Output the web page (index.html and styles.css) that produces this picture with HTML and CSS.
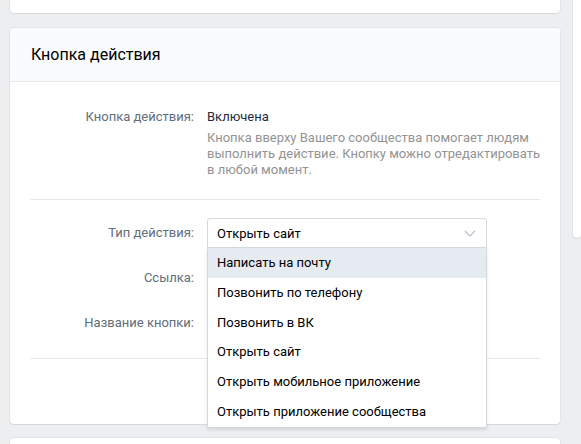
FILE: index.html
```html
<!DOCTYPE html>
<html lang="ru">
<head>
    <meta charset="UTF-8">
    <meta name="viewport" content="width=device-width, initial-scale=1.0">
    <title>Кнопка действия</title>
    <link rel="stylesheet" href="styles.css">
</head>
<body>
    <div class="page">
        <div class="main-column">
            <div class="card card-top"></div>

            <div class="card">
                <div class="card-header">
                    <h2>Кнопка действия</h2>
                </div>

                <div class="card-section card-section-status">
                    <div class="form-row form-row-top">
                        <div class="form-label">Кнопка действия:</div>
                        <div class="form-value">
                            <div class="status">Включена</div>
                            <p class="hint">Кнопка вверху Вашего сообщества помогает людям выполнить действие. Кнопку можно отредактировать в любой момент.</p>
                        </div>
                    </div>
                </div>

                <div class="card-section">
                    <div class="form-row">
                        <label class="form-label">Тип действия:</label>
                        <div class="form-value">
                            <div class="dropdown open">
                                <div class="dropdown-current">
                                    <span>Открыть сайт</span>
                                    <svg class="chevron" width="12" height="7" viewBox="0 0 12 7">
                                        <path d="M1 1l5 5 5-5" fill="none" stroke="#b4bdc8" stroke-width="1.2"/>
                                    </svg>
                                </div>
                                <ul class="dropdown-menu">
                                    <li class="active">Написать на почту</li>
                                    <li>Позвонить по телефону</li>
                                    <li>Позвонить в ВК</li>
                                    <li>Открыть сайт</li>
                                    <li>Открыть мобильное приложение</li>
                                    <li>Открыть приложение сообщества</li>
                                </ul>
                            </div>
                        </div>
                    </div>
                    <div class="form-row">
                        <label class="form-label" for="link">Ссылка:</label>
                        <div class="form-value">
                            <input type="text" id="link" class="text-input">
                        </div>
                    </div>
                    <div class="form-row">
                        <label class="form-label" for="buttonName">Название кнопки:</label>
                        <div class="form-value">
                            <input type="text" id="buttonName" class="text-input">
                        </div>
                    </div>
                </div>

                <!-- save button sits here, covered by the open menu -->
                <div class="card-footer"></div>
            </div>

            <div class="card card-next"></div>
        </div>

        <div class="side-column">
            <div class="card card-side"></div>
        </div>
    </div>
</body>
</html>
```

FILE: styles.css
```css
* {
    margin: 0;
    padding: 0;
    box-sizing: border-box;
}

body {
    background-color: #edeef0;
    font-family: 'Roboto', 'Liberation Sans', sans-serif;
    font-size: 13px;
    color: #000;
    overflow: hidden;
}

.page {
    display: flex;
    gap: 13px;
    padding-left: 10px;
    margin-top: -20px;
}

.main-column {
    width: 550px;
    flex-shrink: 0;
}

.side-column {
    flex: 1;
}

.card {
    background-color: #fff;
    border-radius: 4px;
    box-shadow: 0 1px 0 0 #d7d8db, 0 0 0 1px #e3e4e8;
}

.card-top {
    height: 33px;
    margin-bottom: 15px;
}

.card-side {
    height: 258px;
}

.card-next {
    margin-top: 14px;
    height: 60px;
}

.card-header {
    height: 54px;
    display: flex;
    align-items: center;
    padding: 0 21px;
    background-color: #fafbfc;
    border-bottom: 1px solid #e7e8ec;
    border-radius: 4px 4px 0 0;
}

.card-header h2 {
    font-size: 16px;
    font-weight: normal;
    color: #000;
}

.card-section {
    margin: 0 20px;
    padding: 18px 0 20px;
    border-bottom: 1px solid #e7e8ec;
}

.card-section-status {
    padding: 27px 0 21px;
}

.form-row {
    display: grid;
    grid-template-columns: 164px 1fr;
    column-gap: 13px;
    align-items: center;
    margin-bottom: 15px;
}

.form-row:last-child {
    margin-bottom: 0;
}

.form-row-top {
    align-items: start;
}

.form-label {
    text-align: right;
    color: #626d7a;
    line-height: 16px;
}

.form-value {
    width: 280px;
}

.status {
    line-height: 16px;
    color: #222b38;
}

.hint {
    margin-top: 5px;
    width: 340px;
    line-height: 16px;
    color: #939393;
}

.text-input {
    display: block;
    width: 100%;
    height: 30px;
    border: 1px solid #d3d9de;
    border-radius: 3px;
    font: inherit;
    padding: 0 9px;
}

.dropdown {
    position: relative;
}

.dropdown-current {
    display: flex;
    align-items: center;
    justify-content: space-between;
    height: 30px;
    padding: 0 10px 0 9px;
    border: 1px solid #d3d9de;
    border-radius: 3px;
    background-color: #fff;
}

.dropdown.open .dropdown-current {
    border-radius: 3px 3px 0 0;
}

.chevron {
    display: block;
}

.dropdown-menu {
    position: absolute;
    top: 100%;
    left: 0;
    right: 0;
    z-index: 10;
    list-style: none;
    background-color: #fff;
    border: 1px solid #d3d9de;
    border-top: none;
    box-shadow: 0 2px 3px rgba(0, 0, 0, 0.1);
}

.dropdown-menu li {
    height: 29.8px;
    line-height: 29.8px;
    padding: 0 9px;
    white-space: nowrap;
}

.dropdown-menu li.active {
    background-color: #e5ebf1;
}

.card-footer {
    height: 65px;
}
```
